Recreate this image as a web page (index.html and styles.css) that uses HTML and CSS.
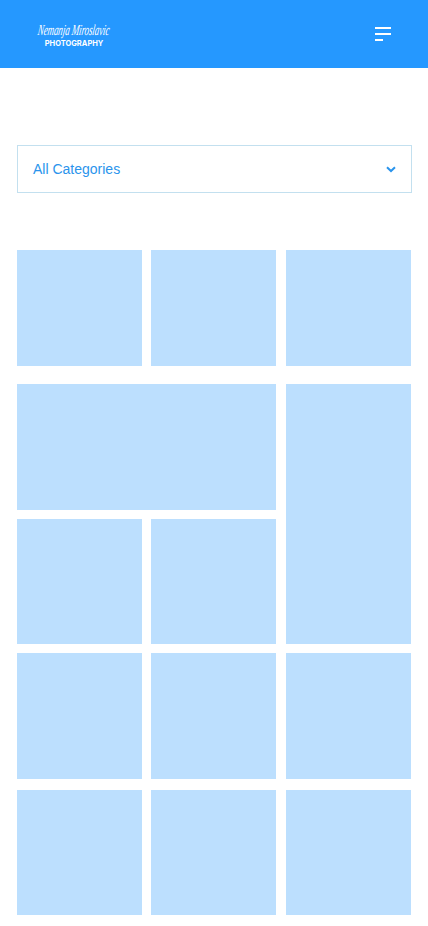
FILE: index.html
```html
<!DOCTYPE html>
<html lang="en">
<head>
  <meta charset="UTF-8" />
  <meta name="viewport" content="width=device-width, initial-scale=1.0"/>
  <title>Photography Gallery</title>
  <link rel="stylesheet" href="styles.css">
</head>
<body>
  <header class="top-bar">
    <a class="logo" href="#">
      <span class="logo-script">Nemanja Miroslavic</span>
      <span class="logo-sub">PHOTOGRAPHY</span>
    </a>
    <button class="menu-btn" aria-label="Menu">
      <span class="menu-line"></span>
      <span class="menu-line"></span>
      <span class="menu-line short"></span>
    </button>
  </header>

  <main class="content">
    <div class="category-select">
      <span>All Categories</span>
      <svg class="chevron" width="10" height="7" viewBox="0 0 10 7" aria-hidden="true">
        <path d="M1 1.2 L5 5 L9 1.2" fill="none" stroke="currentColor" stroke-width="2"/>
      </svg>
    </div>

    <div class="gallery gallery-top">
      <div class="tile"></div>
      <div class="tile"></div>
      <div class="tile"></div>
    </div>

    <div class="gallery gallery-mid">
      <div class="tile wide"></div>
      <div class="tile tall"></div>
      <div class="tile"></div>
      <div class="tile"></div>
      <div class="tile"></div>
      <div class="tile"></div>
      <div class="tile"></div>
    </div>

    <div class="gallery gallery-bottom">
      <div class="tile"></div>
      <div class="tile"></div>
      <div class="tile"></div>
    </div>
  </main>
</body>
</html>
```

FILE: styles.css
```css
body {
  margin: 0;
  padding: 0;
  background: #ffffff;
  font-family: "Liberation Sans", Arial, sans-serif;
}

.top-bar {
  height: 68px;
  background-color: #2598ff;
  display: flex;
  justify-content: space-between;
  align-items: center;
  padding: 0 37px;
}

.logo {
  display: flex;
  flex-direction: column;
  align-items: center;
  width: 74px;
  color: #ffffff;
  text-decoration: none;
}

.logo-script {
  font-family: "Liberation Serif", serif;
  font-style: italic;
  font-size: 9px;
  line-height: 20px;
  letter-spacing: -0.1px;
  white-space: nowrap;
  transform: scaleY(1.7) skewX(-14deg);
}

.logo-sub {
  font-family: Inter, sans-serif;
  font-weight: 700;
  font-size: 7.5px;
  line-height: 8px;
  white-space: nowrap;
}

.menu-btn {
  display: flex;
  flex-direction: column;
  gap: 4px;
  width: 16px;
  padding: 0;
  border: 0;
  background: none;
}

.menu-line {
  display: block;
  width: 16px;
  height: 2px;
  background: #ffffff;
}

.menu-line.short {
  width: 8px;
}

.content {
  padding: 77px 17px 0;
}

.category-select {
  display: flex;
  justify-content: space-between;
  align-items: center;
  box-sizing: border-box;
  width: 395px;
  height: 48px;
  padding: 0 15px;
  border: 1px solid #c3e0ef;
  color: #2a94ec;
  font-size: 14px;
}

.gallery {
  display: grid;
  grid-template-columns: 125px 125px 125px;
  column-gap: 9.4px;
}

.gallery-top {
  grid-template-rows: 116px;
  margin-top: 57px;
}

.gallery-mid {
  grid-template-rows: 126px 125px 126px;
  row-gap: 9px;
  margin-top: 18px;
}

.gallery-bottom {
  grid-template-rows: 125px;
  margin-top: 11px;
}

.tile {
  background-color: #bcdffe;
}

.tile.wide {
  grid-column: span 2;
}

.tile.tall {
  grid-row: span 2;
}
```
